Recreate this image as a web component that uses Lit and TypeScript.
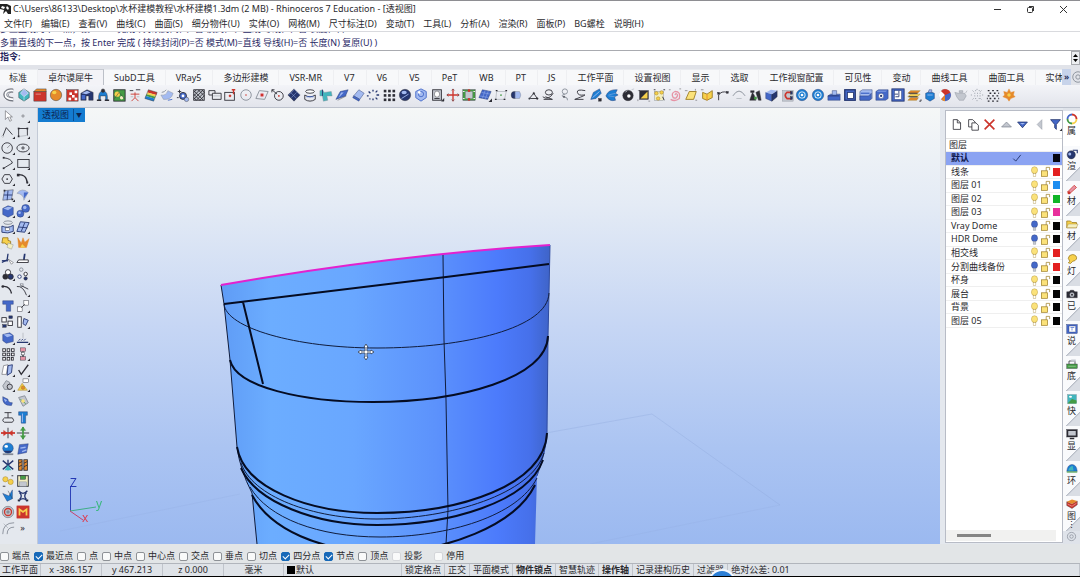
import { LitElement, html, svg, css, nothing } from "lit";
import { customElement, property, state } from "lit/decorators.js";
import { classMap } from "lit/directives/class-map.js";
import { styleMap } from "lit/directives/style-map.js";

// Glyph notation: "<fill><stroke><width in halves><shape>", joined by ";".
// "@" starts an ellipse (cx,cy,rx,ry), "#" a rectangle (x,y,w,h), anything else is path data.
const INK: Record<string, string> = {
  "-": "none", k: "#2d2d35", s: "#858b96", a: "#c3c7cf", n: "#25366f", b: "#4468c8", l: "#a3baf0",
  c: "#41b5bd", r: "#cc352c", o: "#e58a2b", y: "#f6d04b", g: "#459b45", w: "#ffffff", p: "#e692a4",
  t: "#1d7ed2", m: "#e8309c", e: "#f4efc0", d: "#9a7a20", f: "#fbe27a",
};

const TOP: [string, string][] = [
  ["pipe", "-s8M14 3C3 1 1 13 14 13;-w4M14 3C3 1 1 13 14 13;-k1M14 1C0-1-1 15 14 15M14 5C7 4 6 11 14 11"],
  ["polyhedron", "ck1M8 1L14 5V11L8 15L2 11V5Z;lw1M8 1L4 6L8 10L13 6Z;-w1M8 10V15"],
  ["red box", "rk1#1,4,14,11;ok1M1 4L4 1H15V4Z;-w1M3 7H9"],
  ["sphere", "ok1@8,8,6.5,6.5;y-0@6,5,2.5,2"],
  ["checker box", "rk1#2,2,13,13;w-0#5,5,3,3;w-0#11,3,3,3;w-0#8,8,3,3;w-0#4,11,3,3;w-0#11,11,3,3"],
  ["vault", "nk1M1 6L8 2L15 5V14H10V9H7V14H1Z;l-0M2 6L8 3L12 5L7 7Z;b-0#2,8,4,5"],
  ["dome", "tk1M3 14Q2 4 8 3Q14 4 13 14H11V9H5V14Z;kk1@8,3,2,2;-k3M1 14H6M10 14H15"],
  ["terrain", "gk2#2,2,13,13;y-0@6,7,3,3;e-0@11,11,2,2;-k1M3 12L8 5L14 12"],
  ["person", "-r2M8 5V11L4 15M8 11L12 15M3 7H13;-k2M2 3H6M9 2H14;-s1M3 10H6M10 10H13"],
  ["rainbow plane", "r-0M5 2L15 5L14 8L4 5Z;y-0M4 5L14 8L13 10L3 7Z;g-0M3 7L13 10L12 12L2 9Z;t-0M2 9L12 12L11 15L1 12Z;-k1M5 2L15 5L11 15L1 12Z"],
  ["bend plane", "ls1M1 8Q7 9 9 3L15 6Q13 14 4 13Z;-s2M2 5Q5 5 7 2;-b2M9 14L14 13"],
  ["bubbles", "bk2@8,9,4,4;w-0@8,9,1.6,1.6;lk1@12,13,2.5,2.5;-k2M4 2V6M2 4H6M3 11H1"],
  ["hatch", "ak2#2,2,12,12;-k2M2 5L5 2M2 9L9 2M2 13L13 2M5 14L14 5M9 14L14 9M2 3L13 14M2 7L9 14M2 11L5 14M7 2L14 9M11 2L14 5"],
  ["two boxes", "-k2M5 6H15V13H5Z;-k2M1 3H8V6M1 3V8H5;-s1M6 9H14"],
  ["box point", "-k2#2,5,11,9;rr1@8,9,1.2,1.2;-r3M12 2V7M10 2H14"],
  ["dotted circle", "-s2@8,8,6,6;r-0@8,8,.9,.9"],
  ["plane point", "-s2M5 3L15 4L11 13L1 12Z;rp2@8,8,2,2"],
  ["circle arrow", "-k2@9,9,5,5;-k2M1 2L7 7M1 2H4M1 2V5;r-0@9,9,1,1"],
  ["diamond grid", "nk1M8 1L15 8L8 15L1 8Z;-l1M4 5L11 12M8 1L15 8M5 11L11 5M2 8L8 2"],
  ["cylinder rings", "wk2@8,4,5,2;-k2M2 8V13Q8 17 14 13V8Q8 12 2 8Z;-b2M4 10H12"],
  ["T pipe", "cs1M1 3L4 2L6 5L14 4L15 9L9 9L10 14L5 15L4 9L1 9Z;-n2M4 2V9"],
  ["wing", "bn1M1 13L6 4L15 2L12 9Z;l-0M4 11L7 5L10 5Z;-k1M3 14L13 9"],
  ["sheet", "ln1M3 9L9 2L15 6L10 13Z;bn1M3 9L10 13L9 15L2 11Z"],
  ["dot ring", "-n3M8 2V4M3 4L5 6M1 9H3M4 13L5 12M8 14V12M13 13L11 11M15 8H12M13 3L11 5"],
  ["cube grid", "k-0#2,2,3,3;k-0#7,2,3,3;k-0#12,2,3,3;k-0#2,7,3,3;k-0#7,7,3,3;k-0#12,7,3,3;k-0#2,12,3,3;k-0#7,12,3,3;k-0#12,12,3,3"],
  ["dark orb", "nk1@8,8,6.5,6.5;l-0@7,5,3,2;-l2M4 12L12 7"],
  ["light orb", "lb2M8 1L14 4V11L8 15L2 11V4Z;-b2@8,7,3,3;w-0@6,5,1.5,1.5"],
  ["portrait", "ak2#3,2,10,12;wk1@8,7,3,3.5;-k2M5 12H11;kk1M13 15H16V12Z"],
  ["move cross", "-r3M8 1V15M1 8H15;-k1M6 3L8 1L10 3M13 6L15 8L13 10M3 6L1 8L3 10M6 13L8 15L10 13"],
  ["frame", "gk1#1,2,14,12;as1#4,4,8,8;r-0@8,3,1.5,1.5;r-0@8,13,1.5,1.5;-w2M1 4H3M13 4H15M1 12H3M13 12H15"],
  ["tilt grid", "bn1M5 2L15 4L11 13L1 11Z;-l1M8 3L5 12M12 3L8 13M4 5L14 7M2 9L12 11;k-0M12 16H16V12Z"],
  ["box points", "-s1M3 4H14L12 13H2Z;-k3M2 3H4M13 3H15M11 13H13M1 13H3;g-0@8,8,1,1"],
  ["bullet", "nk1@6,8,3.5,4;ls1M7 4H12Q15 8 12 12H7Z"],
  ["nodes", "-k2M5 12L10 6L14 12Z;kk1@10,6,1,1;kk1@14,12,1,1;ks1@5,12,1,1"],
  ["loop", "-k2@9,5,4,3;-k2M2 10Q8 15 14 6M3 13H13L5 10"],
  ["hook ring", "-s2@9,4,3,3;-s2M9 7Q3 9 8 10T12 14;ks1@8,10,1,1"],
  ["s curve", "-k2M14 3Q4 1 5 5T12 8T2 13H12"],
  ["feather", "tn1M2 13L5 5L12 1L14 6L8 12Z;-l2M4 11L12 4;kk1#11,12,3,3"],
  ["fan", "tn1M1 9Q4 1 14 2L12 6L15 8L11 10L12 14Q5 16 1 9Z;-l1M4 8L12 6M4 9L11 10"],
  ["black disc", "kk1@8,8.5,6,6;w-0@9,9,2,2;-a2M5 5L7 3M12 2L15 1"],
  ["half square", "kk1#3,3,10,10;y-0M4 12L12 4V12Z;-k1M1 3H3M13 15H15M1 15V13"],
  ["points region", "es1#3,4,10,10;yd1@5,6,2,2;yd1@11,5,2,2;yd1@7,12,2,2;-k2M2 2H4M13 2H15M12 10L14 14"],
  ["spiral", "-p3M8 8Q9 5 11 8Q10 13 6 11Q3 6 8 4Q15 4 13 12Q8 16 3 13;-k1M1 2H3M13 1H15"],
  ["yellow plane", "fd2M2 13L6 4H14L11 13Z;-k1M1 3H4M13 1V3M13 14H15"],
  ["yellow fold", "yd2M3 5L8 7L14 3V11L8 14L3 12Z;-o2M8 7V14;-k1M1 2H4"],
  ["corner curve", "-k2M3 14V8Q6 3 13 5;kk1#2,5,2,2;kk1#12,4,2,2"],
  ["arch", "-s2M1 9Q8-2 15 9;-s1M5 12H11"],
  ["figures", "kk1M2 14L5 5L7 8L9 14ZM9 5L13 3L15 14H12ZM3 3H7V5H3Z;g-0#7,10,3,3"],
  ["blue solid", "bn1M2 5L9 7V15L2 12Z;nk1M9 7L15 3V10L9 15Z;l-0M2 5L8 2L15 3L9 7Z"],
  ["magnet", "as1#3,3,12,12;-r4M13 5H8Q4 8 8 12H13;nk1#12,4,2,3;nk1#12,10,2,3"],
  ["ring one", "tn1@8,8,6.5,6.5;w-0@8,8,4,4;-t3@8,8,2.3,2.3"],
  ["ring two", "tn1@8,8,6.5,6.5;w-0@8,8,4,4;-t3@8,8,2.3,2.3"],
  ["press", "bn1M1 9L4 7H15V14H1Z;ln1M6 8V3H11V8Z;-n2M1 9H14"],
  ["frame hole", "bn3#2,2,12,12;wn2#5,5,7,7"],
  ["block slot", "ln1M1 4L4 2H15V12L12 14H1Z;bn1M1 9H11L14 6V12L12 14H1Z;-b3M2 6H12"],
  ["block hole", "bn1M1 4L4 2H15V12L12 14H1Z;l-0M2 4L4 3H14L12 4Z;wn1@7,9,3,3;n-0@7,9,1.3,1.3"],
  ["block page", "bn2#1,1,14,14;wn1#4,3,8,10;-n2M9 3V10H5M4 7H8"],
  ["layers", "od1M4 3H15L12 6H1Z;yd1M4 7H15L12 10H1Z;od1M4 11H13L11 14H1Z;-k2M2 6H12M2 10H12M14 15H16V13"],
  ["teapot blue", "tn1M3 6L8 4L13 6V12L8 15L3 12Z;ln1M7 2H10V5H6Z;-l2M5 8H11"],
  ["color ball", "rs1@8,8,6.5,6.5;b-0M8 8V15A7 7 0 0 0 14 5Z;w-0M8 8L3 3A7 7 0 0 0 3 13Z;o-0M8 8L4 13A7 7 0 0 0 8 15Z;r-0M8 8L5 2A7 7 0 0 1 14 5Z"],
  ["teapot gray", "as1M5 6H12L14 9L11 14H6L3 10L1 5Z;as1M6 3H10V5H6ZM13 6L15 3"],
  ["halftone", "-s2M8 1V2M8 14V15M1 8H2M14 8H15M3 3L4 4M12 12L13 13M12 4L13 3M3 13L4 12M5 6H6M8 6H9M11 6H12M5 9H6M8 9H9M11 9H12M6 12H7M10 12H11M6 3H7M10 3H11"],
  ["dot lattice", "-k3M2 3H4M7 3H9M12 3H14M4 6H6M9 6H11M2 9H4M7 9H9M12 9H14M4 12H6M9 12H11M2 15H4M7 15H9M12 15H14M14 6H15M1 12H2M14 12H15"],
  ["leaf", "oo1M8 1L10 5L14 4L13 8L15 10L10 12L8 15L6 12L1 10L3 8L2 4L6 5Z;y-0@8,8,2,2"],
];

const CORNER = ";k-0M13 16H16V13Z";
const SIDE: [string, string][] = [
  ["select", "wk1M5 2V12L8 9L10 14L12 13L10 9H13Z"], ["point", "-k1@8,8,1.3,1.3" + CORNER],
  ["polyline", "-k2M2 13L6 3L13 11;ws1@2,13,1,1" + CORNER], ["control curve", "-k2M3 13V4H13V12;k-0#2,12,2,2;k-0#2,3,2,2;k-0#12,3,2,2;-s1M4 13L12 12" + CORNER],
  ["circle", "-k2@7,8,6,6;-k1M7 8L11 4" + CORNER], ["ellipse", "-k2@8,8,7,4.5;-k2@8,8,1.3,1.3" + CORNER],
  ["arc", "-k2M3 2Q12 3 13 8L3 14;k-0#2,1,2,2;k-0#2,13,2,2" + CORNER], ["rectangle", "-k2#2,4,13,9" + CORNER],
  ["polygon", "-k2M4 3H10L13 8L10 13H4L1 8Z;k-0@7,8,1,1" + CORNER], ["fillet", "-k3M2 3Q12 2 13 13;k-0#1,2,3,3;k-0#12,11,2,2" + CORNER],
  ["patch", "lk1M4 3L14 2L12 13L2 14Z;-n2M8 3L7 14M3 8H13;k-0#3,2,2,2;k-0#12,12,2,2" + CORNER], ["surface", "ls1M1 6Q7-1 14 5L9 14Q9 7 1 6Z;b-0M9 5L14 5L9 12Z" + CORNER],
  ["box", "bn1M2 5L8 2L14 4V12L8 15L2 12Z;l-0M3 5L8 3L13 4L8 7Z" + CORNER], ["spheres", "bn1@5,11,4,4;bn1@11,5,4.5,4.5;l-0@10,4,2,2;l-0@4,10,1.5,1.5" + CORNER],
  ["project", "-s2@8,3,5,2;ln2M1 7Q8 10 14 6V13Q8 16 1 14Z;wk1#5,9,5,3" + CORNER], ["sheet grid", "ln2M5 2L15 3L10 14L1 13Z;-n2M10 3L6 13M3 8L13 9" + CORNER],
  ["join", "yd2M2 2H8V5L11 6V10H7L4 8H1Z;es1M8 8L14 10L12 15L7 13Z"], ["explode", "oo1M2 2L6 8L8 2L10 7L15 3L12 13H3Z;y-0M5 13L7 9L11 13Z"],
  ["trim", "-n3M8 2L7 9L1 12;wk1M8 8L14 12L12 14Z;-n3M1 10H8"], ["split", "-n4M10 2L9 9;wk2M3 9H14V12H1Z"],
  ["rings", "kk1@5,11,3,3;wk2@8,6,3,3;nk2@11,11,3,3" + CORNER], ["dots", "-s2@6,3,2,2;wn2@4,11,2,2;wk2@11,8,2,2;nk1@11,13,2,2"],
  ["hook", "-k3M2 4Q10 3 12 12;k-0@2,4,1.5,1.5"], ["curve edit", "-k2M1 4Q8 3 12 14;ws2#5,1,3,3;-k2M6 3L14 7" + CORNER],
  ["text", "bn1M2 2H14V6H11V14H6V6H2Z"], ["scale", "wk1#9,2,5,5;wk1#2,9,5,5;-k2M6 10L10 6" + CORNER],
  ["align", "wk2#1,3,5,5;wk2#8,7,5,5;nk1#9,1,4,3;nk1#2,11,4,3"], ["distribute", "wk2#2,2,4,12;ln2M9 4L14 6L11 12L8 10Z" + CORNER],
  ["solid", "bn1M2 4L10 2L14 5V12L6 14L2 11Z;l-0M3 4L9 3L13 5L7 7Z" + CORNER], ["section", "-n3M1 13H14;-n2M3 11L5 9M6 11L8 9M9 11L11 9;-s1M8 2V8" + CORNER],
  ["array", "wk2#2,2,3,3;wk2#7,2,3,3;wk2#12,2,3,3;wk2#2,7,3,3;wk2#7,7,3,3;wk2#12,7,3,3;wk2#2,12,3,3;wk2#7,12,3,3;wk2#12,12,2,3"], ["array link", "pk1#5,1,6,4;pk1#5,11,6,4;-k3M8 5V11;wk1#6,6,4,3" + CORNER],
  ["boolean", "wk1M3 3L8 2L6 13L1 13Z;ln2M8 3L13 2L12 11L7 14Z" + CORNER], ["check", "-k3M3 8L6 13L14 2" + CORNER],
  ["cap", "as2M2 9L6 3L10 5V13L4 13Z;ak2@10,10,3,3" + CORNER], ["render prop", "yd1M2 14L7 6L13 14Z;wk1#8,1,6,4;od1@8,11,2,2" + CORNER],
  ["shell", "bn1M2 3Q1 14 12 13L13 10Q8 10 8 6Z;l-0M3 5L7 7L5 9Z"], ["gem", "as2M3 4L10 2L14 10L8 14Z;-g2M5 6L11 11;f-0@8,8,2,2"],
  ["belt", "-k2M4 9H13Q16 12 13 14H4Q0 12 4 9;-k2M8 9V3M4 3H12"], ["bolt", "tn1M3 2H13V6H11V15H6V6H3Z;l-0#7,4,1,10"],
  ["pinch", "-k2M8 2V14;-r4M0 8H16;rr1M3 5L7 8L3 11ZM13 5L9 8L13 11Z"], ["spread", "-k2M1 8H15;-g4M8 1V15;gg1M5 5L8 1L11 5ZM5 11L8 15L11 11Z"],
  ["blue ball", "tn1@8,7,6,6;n-0M3 10A6 6 0 0 0 13 10Z;w-0@6,5,2,1.5;-s4M2 14H14"], ["blue plane", "bn1M4 3L14 2L12 12L2 14Z;-l3M5 7L11 6M7 11L12 9"],
  ["star", "-n3M8 2V14M2 3L14 13M14 3L2 13;c-0M8 8L4 14H12Z"], ["knot", "ok2#3,2,4,12;ok2#9,2,4,12;-k2M3 6L7 4M3 10L7 8M9 6L13 4M9 10L13 8M7 13L9 11"],
  ["bulbs", "yd1@5,6,3,3;yd1@11,9,3,3;-k2M2 14H5M12 2H14"], ["save", "es1#2,2,12,12;-k2#2,2,12,12;gk1#5,2,6,4;as1#4,9,8,5"],
  ["drape", "tn1M2 5L9 8L13 1L13 11L7 14Z;-k1M8 2L13 11"], ["cage", "-n3M3 2Q8 8 13 2M3 14Q8 8 13 14M4 4Q8 8 4 12M12 4Q8 8 12 12;k-0#2,12,2,2;k-0#12,12,2,2"],
  ["gear", "as2@8,8,6.5,6.5;-r3@8,8,4,4;s-0@8,8,2,2"], ["M badge", "rr1#1,1,14,14;-y4M4 12V5L8 8L12 5V12"],
  ["offset", "-s2M2 15Q2 2 15 2M7 15Q7 7 15 7;-s1M8 8L3 3"],
];

const PANELS: [string, string][] = [
  ["属", "-r5M8 2A6 6 0 0 1 14 8;-y5M14 8A6 6 0 0 1 8 14;-g5M8 14A6 6 0 0 1 2 8;-b5M2 8A6 6 0 0 1 8 2"],
  ["渲", "nk1@7,9,5.5,5.5;l-0@5,8,2,2;-n3M9 3H15V7"],
  ["材", "pr2M2 12L11 3L14 6L5 14Z;r-0@4,13,2,2"],
  ["材", "yd2M1 4H6L8 6H14V13H1Z;ed1M3 8H16L14 13H1Z"],
  ["灯", "yd2M5 11L3 7Q4 2 9 2Q15 3 14 8Q12 11 9 11L6 14L3 13Z"],
  ["已", "kk1M1 5H4L6 3H10L12 5H15V13H1Z;as1@8,9,3,3;k-0@8,9,1.3,1.3"],
  ["说", "bn1#1,2,14,12;wn1#4,4,9,8;-b2M6 6H11M8 7V10"],
  ["底", "gk1#1,8,14,6;-k2M4 8V4H12V8;a-0#7,2,6,3;-w1M3 11H13"],
  ["快", "cs1#2,2,12,12;g-0M2 14L8 8L14 10V14Z;w-0@6,5,2,1.2"],
  ["显", "kk1#1,2,14,10;a-0#3,4,10,6;-k4M5 14H11"],
  ["环", "tn1M1 11Q2 2 8 2T15 11Z;c-0M3 10Q5 4 9 4L10 10Z;-g3M1 12H15"],
  ["图", "rk1M1 5L8 8L15 4V9L8 14L1 10Z;o-0M1 5L8 2L15 4L8 8Z;-w1M2 8L8 11L14 7"],
];

const LAYER_TOOLS: [string, string][] = [
  ["new layer", "wk2M4 2H9L13 6V14H4Z;-k2M9 2V6H13"],
  ["new sublayer", "wk2M2 2H7L10 5V11H2Z;wk2M6 6H11L14 9V15H6Z"],
  ["delete", "-r4M2 2L14 14M14 2L2 14"],
  ["move up", "as2M2 11L8 5L14 11Z"],
  ["move down", "bn2M2 5H14L8 12Z;l-0M5 6H11L8 8Z"],
  ["move left", "as1M11 2V14L5 8Z"],
  ["filter", "bn2M2 2H14L9 8V14L7 12V8Z" + CORNER],
];

const BULB_ON = "fd1@8,6,4.5,5;wd1#6,11,4,4";
const BULB_OFF = "bn1@8,6,4.5,5;as1#6,11,4,4";
const LOCK = "fd2#2,7,9,8;-d2M9 7V2H14V6";
const DIAL = "-s2@8,8,6,6;-s2@8,8,2.5,2.5";

const TABS = ["标准", "卓尔谟犀牛", "SubD工具", "VRay5", "多边形建模", "VSR-MR", "V7", "V6", "V5", "PeT", "WB", "PT", "JS",
  "工作平面", "设置视图", "显示", "选取", "工作视窗配置", "可见性", "变动", "曲线工具", "曲面工具", "实体工具"];
const MENUS = ["文件(F)", "编辑(E)", "查看(V)", "曲线(C)", "曲面(S)", "细分物件(U)", "实体(O)", "网格(M)", "尺寸标注(D)",
  "变动(T)", "工具(L)", "分析(A)", "渲染(R)", "面板(P)", "BG螺栓", "说明(H)"];
const LAYERS: [string, string, boolean][] = [
  ["默认", "#050510", true], ["线条", "#e32020", true], ["图层 01", "#1d8df0", true], ["图层 02", "#10b528", true],
  ["图层 03", "#e8309c", true], ["Vray Dome", "#050505", false], ["HDR Dome", "#050505", false], ["相交线", "#e32020", true],
  ["分割曲线备份", "#e32020", false], ["杯身", "#050505", true], ["展台", "#050505", true], ["背景", "#050505", true],
  ["图层 05", "#050505", true],
];
const SNAPS: [string, boolean][] = [["端点", false], ["最近点", true], ["点", false], ["中点", false], ["中心点", false],
  ["交点", false], ["垂点", false], ["切点", false], ["四分点", true], ["节点", true], ["顶点", false], ["投影", false], ["停用", false]];
const MODES: [string, boolean][] = [["锁定格点", false], ["正交", false], ["平面模式", false], ["物件锁点", true],
  ["智慧轨迹", false], ["操作轴", true], ["记录建构历史", false], ["过滤器", false]];

@customElement("line-glyph")
class LineGlyph extends LitElement {
  static styles = css`
    :host { display: block; width: 14px; height: 14px; }
    .art { display: block; width: 100%; height: 100%; overflow: visible; }
  `;
  @property() shape = "";

  private part(seg: string) {
    const fill = INK[seg[0]], stroke = INK[seg[1]], w = Number(seg[2]) / 2, d = seg.slice(3);
    const n = d.slice(1).split(",");
    if (d[0] === "@") return svg`<ellipse cx=${n[0]} cy=${n[1]} rx=${n[2]} ry=${n[3]} fill=${fill} stroke=${stroke} stroke-width=${w} />`;
    if (d[0] === "#") return svg`<rect x=${n[0]} y=${n[1]} width=${n[2]} height=${n[3]} fill=${fill} stroke=${stroke} stroke-width=${w} />`;
    return svg`<path d=${d} fill=${fill} stroke=${stroke} stroke-width=${w} />`;
  }
  render() {
    return html`<svg class="art" viewBox="0 0 16 16" aria-hidden="true">${this.shape.split(";").map((s) => this.part(s))}</svg>`;
  }
}

@customElement("model-view")
class ModelView extends LitElement {
  static styles = css`
    :host { display: block; overflow: hidden; }
    .scene { display: block; width: 100%; height: 100%; }
    .axis { font: 12px "Open Sans", "Noto Sans", sans-serif; }
  `;
  render() {
    return html`<svg class="scene" viewBox="38 108 902 436" preserveAspectRatio="xMinYMin slice">
      <defs>
        <linearGradient id="body" x1="222" x2="550" y1="0" y2="0" gradientUnits="userSpaceOnUse">
          <stop offset="0" stop-color="#5f9cf6" /><stop offset=".15" stop-color="#6cadff" />
          <stop offset=".4" stop-color="#69a7ff" /><stop offset=".65" stop-color="#5c92fc" />
          <stop offset=".84" stop-color="#4c7bfc" /><stop offset=".94" stop-color="#4670ea" />
          <stop offset="1" stop-color="#3f64c8" />
        </linearGradient>
      </defs>
      <g fill="none" stroke="#8fa8dc" stroke-width="1" opacity=".5">
        <path d="M546 433L652 414L780 505" opacity=".7" />
        <path d="M60 531L240 494M780 505L590 544" opacity=".4" />
      </g>
      <path fill="url(#body)" d="M221 285C330 266 440 252 550 245L549 293L548 337L547 433Q546 452 537 476L535 544H257L252 493Q240 470 237 447L230 360L224 304Z" />
      <g fill="none" stroke="#101c3c">
        <path stroke-width="1" d="M221 285L224 304L230 360L237 447Q240 470 252 493L257 544M443 255L444 340L446 400L448 510L446 544" />
        <path stroke-width="1" d="M550 245L549 293L548 337L547 433Q546 452 537 476" stroke="#2d4aa0" />
        <path stroke-width="1" d="M224 304C226 328 296 348 377 348C465 348 548 328 549 293" />
        <path stroke-width="1" d="M241 463C252 496 312 519 377 519C450 519 532 494 544 453M250 487C268 518 318 537 380 537C448 537 518 516 537 478" />
      </g>
      <g fill="none" stroke="#050c22" stroke-width="2">
        <path d="M224 304L446 277L549 264M243 302L263 384" />
        <path d="M230 360C236 387 302 402 373 402C460 402 547 378 548 336" />
        <path d="M237 447C244 488 308 513 377 513C460 513 545 485 547 433" />
        <path d="M241 468C256 502 315 525 377 525C450 525 528 502 543 460" />
        <path d="M252 495C270 529 320 552 383 552C445 552 515 526 535 485" />
      </g>
      <path fill="none" stroke="#e321cf" stroke-width="2" d="M221 285C330 266 440 252 550 245" />
      <path fill="#fff" stroke="#42536e" d="M366 344L368 347H367V351H371V350L374 352L371 354V353H367V357H368L366 360L364 357H365V353H361V354L358 352L361 350V351H365V347H364Z" />
      <path stroke="#2d42b8" d="M70.500 486V511" /><path stroke="#3fae86" d="M70 511L96 507" /><path stroke="#c8426a" d="M70 511L83 520" />
      <text class="axis" x="70" y="487" fill="#2337b4">Z</text>
      <text class="axis" x="96" y="508" fill="#35b878">y</text>
      <text class="axis" x="82" y="522" fill="#dd3c50">x</text>
    </svg>`;
  }
}

@customElement("app-root")
class AppRoot extends LitElement {
  static styles = css`
    :host { display: block; font: 9px/12px "Noto Sans", "Noto Sans CJK SC", sans-serif; color: #2a2a2e; }
    * { box-sizing: border-box; }
    button, input { font: inherit; color: inherit; border: 0; margin: 0; padding: 0; background: none; }
    .app { display: flex; flex-direction: column; height: 100vh; overflow: hidden; background: #e4e8ee; border-top: 1px solid #8e8e92; border-bottom: 1px solid #000; white-space: nowrap; }
    .title { display: flex; align-items: center; height: 16px; background: #fff; gap: 1px; flex: none; }
    .name { flex: 1; }
    .window { display: flex; padding-right: 4px; }
    .window button { width: 25px; display: grid; place-items: center; }
    .window button + button { margin-left: 8px; }
    .logo { width: 12px; height: 12px; }
    .menu { display: flex; gap: 9px; height: 15px; padding-left: 4px; background: #fff; border-bottom: 1px solid #d9dade; flex: none; }
    .history { display: flex; flex-direction: column; justify-content: flex-end; height: 19px; background: #fff; border-bottom: 1px solid #a9abb0; overflow: hidden; color: #2b2a66; line-height: 14px; flex: none; }
    .prompt { display: flex; height: 14px; background: #fff; color: #24235c; font-weight: 600; flex: none; }
    .prompt input { flex: 1; min-width: 0; padding-left: 3px; outline: 0; }
    .spin { display: grid; width: 9px; height: 14px; background: #eceef1; border: 1px solid #a9abb0; place-items: center; }
    .strip { display: flex; height: 20px; padding-top: 4px; background: #e1e3e9; overflow: hidden; flex: none; }
    .tabs { display: flex; flex: 1; min-width: 0; overflow: hidden; background: #f7f8fa; }
    .tab { flex: none; height: 16px; padding: 0 10px; border-right: 1px solid #eeeff2; border-top: 1px solid #e9ebef; }
    .tab.latin { padding-right: 11px; }
    .tab:first-child { padding-left: 9px; }
    .tab.on { background: #f3f3f7; border-right-color: #bcc0c8; border-top-color: #c8cbd2; }
    .more { width: 9px; background: #c7d3ea; color: #1d2d58; font-weight: 600; }
    .gearbox { width: 9px; display: grid; place-items: center; overflow: hidden; }
    .tools { display: grid; grid-template-columns: repeat(64, minmax(0, 1fr)); height: 23px; padding: 0 63px 2px 0; align-items: center; justify-items: center; background: linear-gradient(#f3f4f8, #e2e4eb); border-bottom: 1px solid #bcc1cc; flex: none; }
    .tools button, .side button { display: grid; place-items: center; }
    .main { display: grid; grid-template-columns: 37px minmax(0, 1fr) 123px 17px; flex: 1; min-height: 0; }
    .side { display: grid; grid-template-columns: 15px 15px; grid-template-rows: repeat(27, minmax(0, 1fr)); justify-items: center; align-items: center; padding-bottom: 8px; min-height: 0; }
    .view { position: relative; display: grid; min-height: 0; border-left: 1px solid #c3cad6; background: linear-gradient(#f5f7f7, #e4ebf5 22%, #c6d6f4 50%, #abc4f2 78%, #9bb9f0); }
    .view model-view { min-height: 0; height: 100%; }
    .viewname { position: absolute; left: 0; top: 0; display: flex; align-items: center; gap: 4px; height: 14px; padding: 0 2px 0 4px; background: #147cd0; color: #0c2350; }
    .arrow { border-left: 1px solid #0c4f90; padding: 0 1px 0 2px; font-size: 6px; }
    .layers { display: flex; flex-direction: column; margin: 2px 0 1px 5px; border: 1px solid #b8bcc6; background: #fff; min-height: 0; }
    .layertools { display: flex; justify-content: space-between; padding: 7px 0 6px 4px; }
    .layertools line-glyph { width: 13px; height: 13px; }
    .grid { width: 100%; height: 190px; border-collapse: collapse; margin-top: 1px; }
    .grid th, .grid td { padding: 0; line-height: 12px; text-align: left; font-weight: 400; border-bottom: 1px solid #efefef; }
    .grid th { padding-left: 3px; border-top: 1px solid #e2e2e2; }
    .grid .label { padding-left: 5px; }
    .grid .cell { width: 11px; }
    .grid .mark { width: 17px; }
    .cell line-glyph { width: 11px; height: 11px; }
    .mark line-glyph { width: 10px; height: 10px; }
    .swatch { display: block; width: 7px; height: 8px; margin-left: 2px; }
    .chosen td { background: #8ba3f2; color: #10184c; font-weight: 700; }
    .scroll { margin: auto 6px 1px 0; height: 11px; padding: 4px 0 0 11px; background: #f1f1f0; }
    .thumb { width: 34px; height: 3px; background: #858585; }
    .panels { display: flex; flex-direction: column; padding-top: 3px; background: #dfe3ea; overflow: hidden; }
    .panel { display: grid; justify-items: center; align-content: start; height: 35px; padding-top: 2px; line-height: 11px; flex: none; background: linear-gradient(135deg, #f9fafc 72%, #b9bec8 73%, #d9dde4 77%); }
    .panel line-glyph { width: 12px; height: 12px; }
    .panel:first-child { background: #fff; }
    .more-panels { line-height: 8px; }
    .dial { margin: 0 auto; }
    .dial line-glyph { width: 11px; height: 11px; }
    .snaps { display: flex; align-items: center; gap: 4px; height: 19px; padding-top: 5px; flex: none; background: #e2e5e7; }
    .snap { display: flex; align-items: center; gap: 3px; }
    .snap input { appearance: none; width: 9px; height: 9px; background: #f9fafa; border: 1px solid #8d9196; border-radius: 2px; display: grid; place-items: center; }
    .snap input:checked { background: #1769b8; border-color: #1769b8; }
    .snap input:checked::after { content: ""; width: 5px; height: 3px; border: solid #fff; border-width: 0 0 1px 1px; transform: rotate(-45deg); }
    .snap.soft input { border-color: #d4d6da; }
    .snap:last-child { margin-left: 8px; }
    .status { position: relative; display: flex; height: 13px; border-top: 1px solid #b1b5bc; background: #dfe3e8; flex: none; }
    .status > * { border-right: 1px solid #c0c4cb; padding: 0 3px; line-height: 12px; }
    .status .plane { flex: 0 0 41px; padding: 0 1px; }
    .coord { flex: 0 0 61px; text-align: center; }
    .unit { flex: 0 0 60px; text-align: center; }
    .current { flex: 0 0 118px; display: flex; align-items: center; gap: 1px; }
    .current i { width: 8px; height: 8px; background: #000; }
    .mode.on { font-weight: 700; }
    .status .rest { flex: 1; }
    .status .ball { position: absolute; left: 708px; top: 5px; width: 28px; height: 28px; padding: 0; border: 2px solid #f5f9ff; border-radius: 50%; background: #2c7fd6; }
    .glyph-x { width: 9px; height: 9px; fill: none; stroke: #333; }
  `;

  @state() private tab = "卓尔谟犀牛";
  @state() private layer = "默认";

  render() {
    return html`<div class="app">
      <header class="title">
        <svg class="logo" viewBox="0 0 12 12" aria-hidden="true"><path fill="#222" d="M0 1H7L11 3V11H8L6 8L3 11L4 7L0 6Z" /><path fill="#fff" d="M2 3L5 4L4 6L1 5ZM7 3L9 5L8 7L6 5Z" /></svg>
        <span class="name">C:\\Users\\86133\\Desktop\\水杯建模教程\\水杯建模1.3dm (2 MB) - Rhinoceros 7 Education - [透视图]</span>
        <span class="window">
          <button aria-label="minimize"><svg class="glyph-x" viewBox="0 0 9 9"><path d="M1 4.500H8" /></svg></button>
          <button aria-label="restore"><svg class="glyph-x" viewBox="0 0 9 9"><rect x="1.500" y="2.500" width="5" height="5" rx="1" /><path d="M3 1.500H7.500V6" /></svg></button>
          <button aria-label="close"><svg class="glyph-x" viewBox="0 0 9 9"><path d="M1 1L8 8M8 1L1 8" /></svg></button>
        </span>
      </header>
      <nav class="menu">${MENUS.map((m) => html`<button>${m}</button>`)}</nav>
      <div class="history"><span>多重直线的下一点，按 Enter 完成 ( 持续封闭(P)=否 模式(M)=直线 导线(H)=否 长度(N) )</span><span>多重直线的下一点，按 Enter 完成 ( 持续封闭(P)=否 模式(M)=直线 导线(H)=否 长度(N) 复原(U) )</span></div>
      <div class="prompt"><label for="cmd">指令:</label><input id="cmd" autocomplete="off" />
        <button class="spin" aria-label="scroll history"><svg width="5" height="10" viewBox="0 0 5 10"><path d="M0 4L2.500 1L5 4ZM0 6L2.500 9L5 6Z" /></svg></button></div>
      <div class="strip">
        <div class="tabs" role="tablist">${TABS.map((t) => html`<button role="tab" aria-selected=${t === this.tab}
          class=${classMap({ tab: true, on: t === this.tab, latin: /^[\w-]+$/.test(t) })} @click=${() => (this.tab = t)}>${t}</button>`)}</div>
        <button class="more">»</button><button class="gearbox" aria-label="options"><line-glyph .shape=${DIAL}></line-glyph></button>
      </div>
      <div class="tools">${TOP.map(([n, s]) => html`<button aria-label=${n}><line-glyph .shape=${s}></line-glyph></button>`)}</div>
      <main class="main">
        <div class="side">${SIDE.map(([n, s]) => html`<button aria-label=${n}><line-glyph .shape=${s}></line-glyph></button>`)}<button>»</button></div>
        <section class="view"><model-view></model-view><button class="viewname">透视图<span class="arrow">▼</span></button></section>
        <section class="layers">
          <div class="layertools">${LAYER_TOOLS.map(([n, s]) => html`<button aria-label=${n}><line-glyph .shape=${s}></line-glyph></button>`)}</div>
          <table class="grid">
            <thead><tr><th colspan="5">图层</th></tr></thead>
            <tbody>${LAYERS.map(([n, c, on]) => html`<tr class=${classMap({ chosen: n === this.layer })} @click=${() => (this.layer = n)}>
              <td class="label">${n}</td>
              <td class="mark">${n === this.layer ? html`<line-glyph shape="-n3M2 9L6 13L14 3"></line-glyph>` : nothing}</td>
              <td class="cell">${n === this.layer ? nothing : html`<line-glyph .shape=${on ? BULB_ON : BULB_OFF}></line-glyph>`}</td>
              <td class="cell">${n === this.layer ? nothing : html`<line-glyph .shape=${LOCK}></line-glyph>`}</td>
              <td class="cell"><span class="swatch" style=${styleMap({ background: c })}></span></td>
            </tr>`)}</tbody>
          </table>
          <div class="scroll"><div class="thumb"></div></div>
        </section>
        <aside class="panels">${PANELS.map(([n, s], i) => html`<button class="panel"><line-glyph .shape=${s}></line-glyph>${n}${i === PANELS.length - 1 ? html`<span class="more-panels">⋮</span>` : nothing}</button>`)}
          <button class="dial" aria-label="panel options"><line-glyph .shape=${DIAL}></line-glyph></button></aside>
      </main>
      <div class="snaps">${SNAPS.map(([n, on], i) => html`<label class=${classMap({ snap: true, soft: i > 10 })}><input type="checkbox" .checked=${on} />${n}</label>`)}</div>
      <footer class="status">
        <button class="plane">工作平面</button><span class="coord">x -386.157</span><span class="coord">y 467.213</span><span class="coord">z 0.000</span>
        <span class="unit">毫米</span><button class="current"><i></i>默认</button>
        ${MODES.map(([n, on]) => html`<button class=${classMap({ mode: true, on })}>${n}</button>`)}
        <span class="rest">绝对公差: 0.01</span><span class="ball"></span>
      </footer>
    </div>`;
  }
}
